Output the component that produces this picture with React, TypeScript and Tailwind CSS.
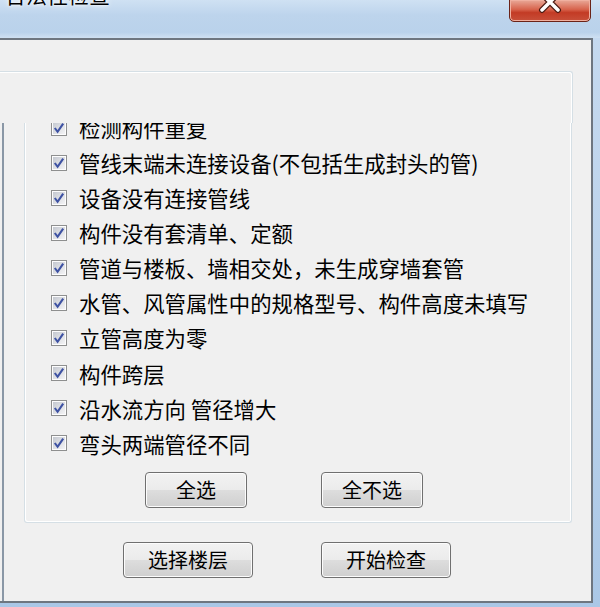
import React from "react";

const ITEMS = [
  "检测构件重复",
  "管线末端未连接设备(不包括生成封头的管)",
  "设备没有连接管线",
  "构件没有套清单、定额",
  "管道与楼板、墙相交处，未生成穿墙套管",
  "水管、风管属性中的规格型号、构件高度未填写",
  "立管高度为零",
  "构件跨层",
  "沿水流方向 管径增大",
  "弯头两端管径不同",
];

const FONT = { fontFamily: '"Noto Sans CJK SC", "Noto Sans", sans-serif' };

function CheckBox() {
  return (
    <svg width="16" height="16" viewBox="0 0 16 16" className="shrink-0">
      <defs>
        <linearGradient id="cbg" x1="0" y1="0" x2="1" y2="1">
          <stop offset="0" stopColor="#c4c8d0" />
          <stop offset="1" stopColor="#f4f4f6" />
        </linearGradient>
      </defs>
      <rect x="0.5" y="0.5" width="15" height="15" fill="#fdfdfd" stroke="#8e8f8f" />
      <rect x="2" y="2" width="12" height="12" fill="url(#cbg)" />
      <path d="M3.8 8 L6.6 11.8 L12.2 3.6" fill="none" stroke="#3e52a3" strokeWidth="2.1" />
    </svg>
  );
}

function WinButton({ label, w }: { label: string; w: string }) {
  return (
    <button
      className={`${w} h-[36px] rounded-[4px] border border-[#707070] bg-[linear-gradient(#f2f2f2_0%,#ebebeb_50%,#dddddd_51%,#cfcfcf_100%)] shadow-[inset_0_0_0_1px_#fcfcfc] text-[20px] text-black flex items-center justify-center`}
      style={FONT}
    >
      {label}
    </button>
  );
}

export default function App() {
  return (
    <div className="w-[600px] h-[607px] overflow-hidden flex flex-col bg-[linear-gradient(#c6daf0,#b9d1ea_60%,#aac7e6)]" style={FONT}>
      {/* title bar */}
      <div className="h-[38px] shrink-0 flex justify-between overflow-hidden bg-[linear-gradient(#cfe1f3,#bdd4ec_40%,#bad2eb_85%,#cfe0f2)]">
        <div className="pl-[5px] -mt-[18px] text-[21px] leading-[24px] text-black [text-shadow:0_0_6px_#ffffff,0_0_3px_#ffffff]">合法性检查</div>
        <div className="mr-[9px] w-[82px] h-[23px] -mt-px rounded-b-[5px] border border-[#6b2318] bg-[linear-gradient(#e9a998,#d7634c_45%,#c33b25_60%,#c8503a)] shadow-[inset_0_0_0_1px_#f0b0a0] flex justify-center overflow-hidden">
          <svg width="26" height="22" viewBox="0 0 26 22" className="-mt-[8px]">
            <path d="M5 2 L21 18 M21 2 L5 18" stroke="#4a1a12" strokeWidth="6" strokeLinecap="round" />
            <path d="M5 2 L21 18 M21 2 L5 18" stroke="#ffffff" strokeWidth="3.5" strokeLinecap="round" />
          </svg>
        </div>
      </div>

      {/* client area */}
      <div className="w-[593px] h-[565px] shrink-0 border-t-2 border-r-2 border-b-2 border-[#6e7680] bg-[#f0f0f0] flex flex-col">
        <div className="h-[83px] shrink-0 pt-[31px]">
          <div className="w-[573px] h-[52px] border-t border-r rounded-tr-[3px] border-[#d5dfe5] shadow-[inset_-1px_1px_0_#ffffff]" />
        </div>
        <div className="flex-1 ml-[2px] border-l-2 border-[#8a97a6] pl-[20px] flex flex-col">
          <div className="w-[548px] h-[400px] border-l border-r border-b rounded-b-[3px] border-[#d5dfe5] shadow-[inset_1px_-1px_0_#ffffff,inset_-1px_0_0_#ffffff] flex flex-col">
            <div className="h-[337px] overflow-hidden">
              <div className="-mt-[13px] pl-[26px]">
                {ITEMS.map((t) => (
                  <div key={t} className="h-[35.1px] flex items-center gap-[12px]">
                    <CheckBox />
                    <span className="text-[21.4px] leading-none text-black whitespace-nowrap">{t}</span>
                  </div>
                ))}
              </div>
            </div>
            <div className="mt-[12px] pl-[120px] flex gap-[74px]">
              <WinButton label="全选" w="w-[102px]" />
              <WinButton label="全不选" w="w-[102px]" />
            </div>
          </div>
          <div className="mt-[19px] pl-[99px] flex gap-[68px]">
            <WinButton label="选择楼层" w="w-[130px]" />
            <WinButton label="开始检查" w="w-[130px]" />
          </div>
        </div>
      </div>
    </div>
  );
}
